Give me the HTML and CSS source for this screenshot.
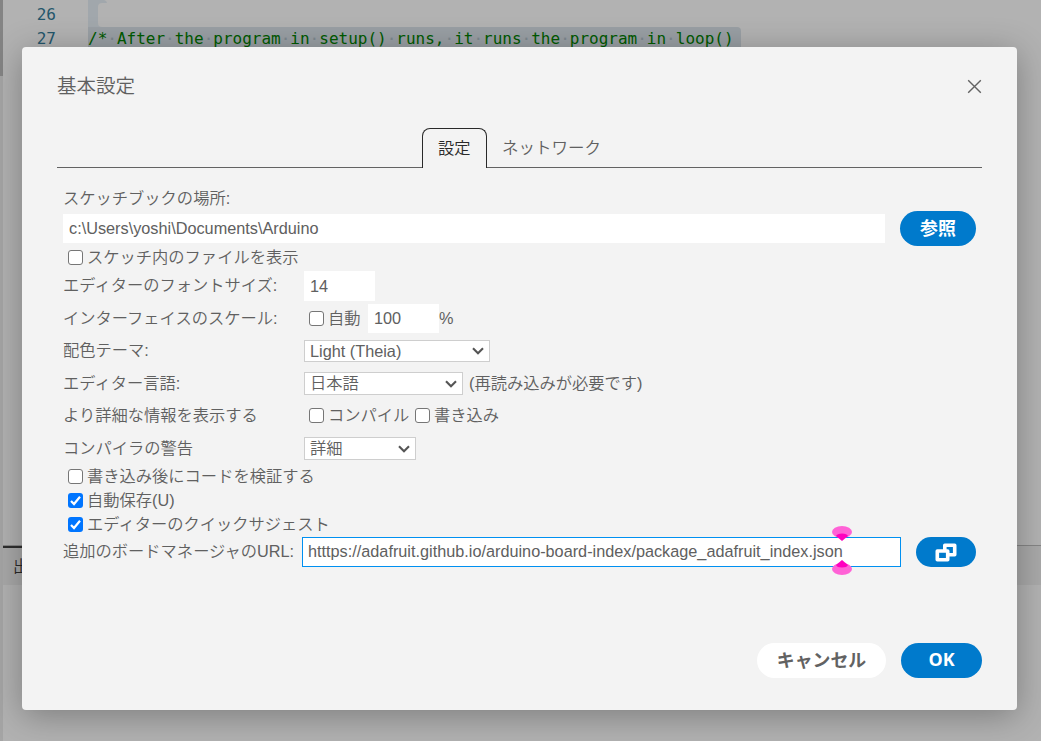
FILE: index.html
```
<!DOCTYPE html>
<html lang="ja">
<head>
<meta charset="utf-8">
<title>基本設定</title>
<link rel="stylesheet" href="styles.css">
</head>
<body>
<div class="app">
  <div class="rail"></div>
  <div class="workbench">
    <div class="editor">
      <div class="line"><span class="num">26</span><span class="code blank"><i></i></span></div>
      <div class="line"><span class="num">27</span><span class="code sel">/*<b>·</b>After<b>·</b>the<b>·</b>program<b>·</b>in<b>·</b>setup()<b>·</b>runs,<b>·</b>it<b>·</b>runs<b>·</b>the<b>·</b>program<b>·</b>in<b>·</b>loop()</span></div>
    </div>
    <div class="output-bar"><span class="output-tab">出力</span></div>
  </div>
</div>

<div class="dialog">
  <header class="header">
    <span class="title">基本設定</span>
    <svg class="close" width="15" height="15" viewBox="0 0 15 15"><path d="M1.2 1.2 13.8 13.8M13.8 1.2 1.2 13.8" fill="none" stroke="#626262" stroke-width="1.4"/></svg>
  </header>
  <nav class="tabs">
    <span class="tab active">設定</span>
    <span class="tab">ネットワーク</span>
  </nav>
  <main class="form">
    <div class="row label-row"><span>スケッチブックの場所:</span></div>
    <div class="row path-row"><span class="input path"><span class="path-text">c:\Users\yoshi\Documents\Arduino</span></span><span class="button browse">参照</span></div>
    <div class="row files-row"><span class="check"></span><span>スケッチ内のファイルを表示</span></div>
    <div class="row font-row"><span class="label">エディターのフォントサイズ:</span><span class="input number">14</span></div>
    <div class="row scale-row"><span class="label">インターフェイスのスケール:</span><span class="check"></span><span class="auto">自動</span><span class="input number">100</span><span>%</span></div>
    <div class="row theme-row"><span class="label">配色テーマ:</span><span class="select theme">Light (Theia)<svg class="chevron" width="12" height="8" viewBox="0 0 12 8"><path d="M1 1.3 6 6.3 11 1.3"/></svg></span></div>
    <div class="row lang-row"><span class="label">エディター言語:</span><span class="select lang">日本語<svg class="chevron" width="12" height="8" viewBox="0 0 12 8"><path d="M1 1.3 6 6.3 11 1.3"/></svg></span><span class="note">(再読み込みが必要です)</span></div>
    <div class="row verbose-row"><span class="label">より詳細な情報を表示する</span><span class="check"></span><span class="compile">コンパイル</span><span class="check"></span><span>書き込み</span></div>
    <div class="row warn-row"><span class="label">コンパイラの警告</span><span class="select warn">詳細<svg class="chevron" width="12" height="8" viewBox="0 0 12 8"><path d="M1 1.3 6 6.3 11 1.3"/></svg></span></div>
    <div class="row verify-row"><span class="check"></span><span>書き込み後にコードを検証する</span></div>
    <div class="row save-row"><span class="check on"><svg width="15" height="15" viewBox="0 0 15 15"><path d="M3 8 6 11 12 3.7"/></svg></span><span>自動保存(U)</span></div>
    <div class="row suggest-row"><span class="check on"><svg width="15" height="15" viewBox="0 0 15 15"><path d="M3 8 6 11 12 3.7"/></svg></span><span>エディターのクイックサジェスト</span></div>
    <div class="row url-row">
      <span class="url-label">追加のボードマネージャのURL:</span>
      <span class="input url"><span class="url-text">htttps://adafruit.github.io/arduino-board-index/package_adafruit_index.json</span>
        <svg class="marker top" width="20" height="15" viewBox="0 0 20 15"><ellipse cx="10" cy="6" rx="10" ry="6" fill="#ff62d6"/><path d="M4 10Q5 7.5 10 7.5T16 10L10 15Z" fill="#ff00bf"/></svg>
        <svg class="marker bottom" width="20" height="15" viewBox="0 0 20 15"><ellipse cx="10" cy="9" rx="10" ry="6" fill="#ff62d6"/><path d="M4 5Q5 7.5 10 7.5T16 5L10 0Z" fill="#ff00bf"/></svg>
      </span>
      <span class="button windows"><svg width="22" height="19" viewBox="0 0 22 19"><path d="M9.8 2.3H19.7V11.7H9.8Z" fill="none" stroke="#fff" stroke-width="3.6" stroke-linejoin="round"/><path d="M2.3 8H12.7V16.7H2.3Z" fill="#007acc" stroke="#fff" stroke-width="3.6" stroke-linejoin="round"/></svg></span>
    </div>
  </main>
  <footer class="footer"><span class="button cancel">キャンセル</span><span class="button ok">OK</span></footer>
</div>
</body>
</html>
```
FILE: styles.css
```
* { box-sizing: border-box; }
body {
  margin: 0;
  width: 1041px;
  height: 741px;
  overflow: hidden;
  position: relative;
  background: #b2b2b2;
  color: #606060;
  font: 350 16.28px/1 "Liberation Sans", "Noto Sans CJK JP", sans-serif;
  white-space: nowrap;
}
svg { display: block; flex: none; }

.app { display: flex; height: 741px; }
.rail { width: 3px; background: linear-gradient(#848484 76px, #a5a5a5 76px); }
.workbench { flex: 1; display: flex; flex-direction: column; }
.editor { height: 543px; padding-top: 3px; }
.line { display: flex; height: 24px; }
.num { width: 53px; text-align: right; color: #24566b; font: 16px/24px "DejaVu Sans Mono", monospace; }
.code { margin-left: 32px; height: 24px; }
.sel { padding: 0 7px 0 0; border-radius: 0 4px 0 0; background: #999fa4; color: #005a00; font: 16px/24px "DejaVu Sans Mono", monospace; }
.sel b { color: #7e8990; font-weight: 400; }
.blank { display: flex; width: 19px; margin-top: -3px; height: 27px; background: #a1a7ac; border-top-right-radius: 4px; }
.blank i { width: 9px; margin-left: 10px; margin-top: 3px; flex: none; height: 24px; background: #b2b2b2; border-radius: 4px 0 0 4px; }
.output-bar { margin-top: 2px; height: 40px; border-top: 1px solid #858585; background: #a9a9a9; }
.output-tab { display: block; width: 70px; height: 37px; border-top: 2px solid #2e2e2e; padding: 10px 0 0 10px; color: #292929; }

.dialog {
  position: absolute;
  left: 22px;
  top: 47px;
  width: 995px;
  height: 663px;
  padding: 0 35px;
  display: flex;
  flex-direction: column;
  background: #f3f3f3;
  border-radius: 4px;
  box-shadow: 0 6px 34px rgba(0, 0, 0, .3);
}
.header { display: flex; align-items: center; justify-content: space-between; height: 79px; }
.title { font-size: 19.5px; }
.tabs { display: flex; height: 42px; padding: 2px 0 0 365px; border-bottom: 1px solid #626262; }
.tab { height: 40px; padding: 0 15px; line-height: 41px; font-size: 16.5px; }
.tab.active { width: 65px; line-height: 39px; font-size: 16.25px; border: 1px solid #292929; border-bottom: 0; border-radius: 8px 8px 0 0; background: #f3f3f3; color: #292929; }

.form { height: 475px; padding: 17px 6px 0; }
.row { display: flex; align-items: center; }
.label { width: 241px; }
.label-row { height: 26px; }
.path-row { height: 35px; justify-content: space-between; }
.files-row { height: 22px; }
.font-row { height: 36px; }
.font-row .label { margin-top: -2px; }
.scale-row { height: 29px; }
.theme-row { height: 35px; }
.lang-row { height: 31px; }
.verbose-row { height: 32px; }
.warn-row { height: 35px; }
.verify-row { height: 21px; }
.save-row { height: 25px; padding-top: 1px; }
.suggest-row { height: 24px; }
.url-row { height: 32px; }

.input { display: flex; align-items: center; height: 29px; background: #fff; padding: 0 6px; }
.path { width: 822px; }
.number { width: 71px; }
.font-row .number { height: 30px; }
.auto { width: 40px; }
.check { flex: none; width: 15px; height: 15px; margin: 0 4px 0 5px; border: 1.4px solid #767676; border-radius: 3px; background: #fff; }
.compile { width: 82px; }
.check.on { border: 0; background: #0075ff; }
.check.on path { fill: none; stroke: #fff; stroke-width: 2.2; }
.select { display: flex; align-items: center; justify-content: space-between; padding: 0 5px; height: 23px; border: 1px solid #cecece; background: #fff; }
.theme { width: 186px; height: 22px; padding-top: 1px; }
.lang { width: 159px; }
.warn { width: 112px; }
.chevron path { fill: none; stroke: #555; stroke-width: 2.1; }
.note { margin-left: 6px; }
.url-label { width: 239px; margin-top: -2px; }
.url { position: relative; width: 599px; height: 30px; padding: 0 5px; border: 1px solid #0090f1; }
.url-text { margin-top: -1px; font-size: 16.25px; }
.marker { position: absolute; left: 529px; }
.marker.top { top: -12px; }
.marker.bottom { bottom: -9px; }

.button { display: flex; align-items: center; justify-content: center; height: 35px; border-radius: 18px; background: #007acc; color: #fff; font: 700 17.9px/1 "Open Sans", "Noto Sans CJK JP", sans-serif; }
.browse { width: 76px; }
.windows { width: 60px; height: 30px; margin-left: 15px; }
.footer { display: flex; justify-content: flex-end; gap: 15px; }
.cancel { width: 129px; background: #fff; color: #626262; }
.ok { width: 81px; padding-bottom: 1px; }
```
